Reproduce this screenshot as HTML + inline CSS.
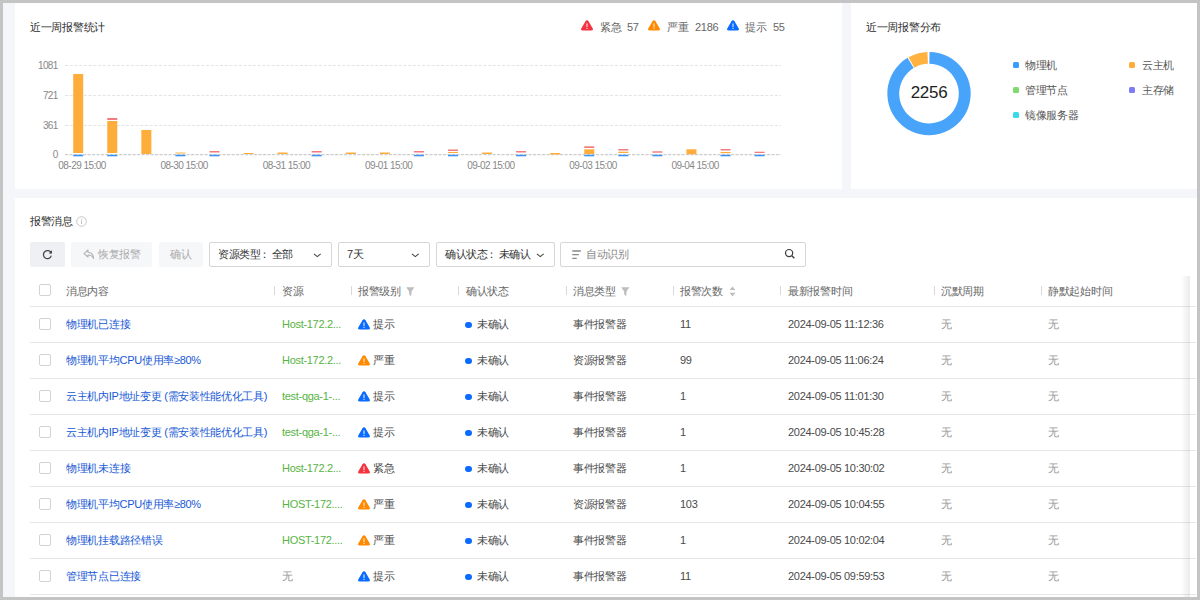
<!DOCTYPE html><html><head><meta charset="utf-8"><style>
*{margin:0;padding:0;box-sizing:border-box}
html,body{width:1200px;height:600px;overflow:hidden}
body{background:#c4c4c4;font-family:"Liberation Sans",sans-serif;font-size:11px;letter-spacing:-0.3px;color:#333;position:relative}
.bg{position:absolute;left:3px;top:3px;width:1194px;height:594px;background:#f5f6fa}
.card{position:absolute;background:#fff}
.t{position:absolute;white-space:nowrap;line-height:12px}
.g{color:#666}
.dk{color:#4a4a4a}
.ti{color:#2a2a2a}
.sk{color:#333}
.lk{color:#1658d6}
.gr{color:#56b443}
.mu{color:#999}
.hd{color:#666}
.sep{position:absolute;width:1px;height:9px;background:#d8d8d8;top:286px}
.hl{position:absolute;left:30px;width:1166px;height:1px;background:#e6e7ea}
.cb{position:absolute;left:39px;width:12px;height:12px;border:1px solid #d3d3d3;border-radius:2px;background:#fff}
.btn{position:absolute;top:242px;height:25px;border-radius:2px}
.sel{position:absolute;top:242px;height:25px;border:1px solid #d6d6d6;border-radius:2px;background:#fff}
.dot{position:absolute;width:6px;height:6px;border-radius:50%;background:#0a6cff}
.lg{position:absolute;width:6px;height:6px;border-radius:1.5px}
</style></head><body>
<div class="bg"></div>
<div class="card" style="left:15px;top:3px;width:827px;height:186px"></div>
<div class="card" style="left:851px;top:3px;width:346px;height:186px"></div>
<div class="card" style="left:15px;top:198px;width:1182px;height:399px"></div>

<div class="t ti" style="left:30px;top:21px;">近一周报警统计</div>
<svg style="position:absolute;left:581px;top:20px" width="12" height="11" viewBox="0 0 12 11"><path d="M6 0.3 Q6.9 0.3 7.5 1.3 L11.6 8.2 Q12.5 10.5 10.2 10.5 L1.8 10.5 Q-0.5 10.5 0.4 8.2 L4.5 1.3 Q5.1 0.3 6 0.3Z" fill="#f5323f"/><rect x="5.45" y="3.4" width="1.1" height="3.6" fill="#fff" opacity="0.85"/><rect x="5.45" y="7.8" width="1.1" height="1.2" fill="#fff" opacity="0.85"/></svg>
<div class="t g" style="left:600px;top:21px;">紧急</div>
<div class="t g" style="left:627px;top:21px;">57</div>
<svg style="position:absolute;left:648px;top:20px" width="12" height="11" viewBox="0 0 12 11"><path d="M6 0.3 Q6.9 0.3 7.5 1.3 L11.6 8.2 Q12.5 10.5 10.2 10.5 L1.8 10.5 Q-0.5 10.5 0.4 8.2 L4.5 1.3 Q5.1 0.3 6 0.3Z" fill="#ff8a00"/><rect x="5.45" y="3.4" width="1.1" height="3.6" fill="#fff" opacity="0.85"/><rect x="5.45" y="7.8" width="1.1" height="1.2" fill="#fff" opacity="0.85"/></svg>
<div class="t g" style="left:667px;top:21px;">严重</div>
<div class="t g" style="left:695px;top:21px;">2186</div>
<svg style="position:absolute;left:727px;top:20px" width="12" height="11" viewBox="0 0 12 11"><path d="M6 0.3 Q6.9 0.3 7.5 1.3 L11.6 8.2 Q12.5 10.5 10.2 10.5 L1.8 10.5 Q-0.5 10.5 0.4 8.2 L4.5 1.3 Q5.1 0.3 6 0.3Z" fill="#0a6cff"/><rect x="5.45" y="3.4" width="1.1" height="3.6" fill="#fff" opacity="0.85"/><rect x="5.45" y="7.8" width="1.1" height="1.2" fill="#fff" opacity="0.85"/></svg>
<div class="t g" style="left:745px;top:21px;">提示</div>
<div class="t g" style="left:773px;top:21px;">55</div>
<svg style="position:absolute;left:0;top:0" width="842" height="189"><line x1="65" y1="65.5" x2="781" y2="65.5" stroke="#e3e4e9" stroke-width="1" stroke-dasharray="3 1.7"/><line x1="65" y1="95.5" x2="781" y2="95.5" stroke="#e3e4e9" stroke-width="1" stroke-dasharray="3 1.7"/><line x1="65" y1="125.5" x2="781" y2="125.5" stroke="#e3e4e9" stroke-width="1" stroke-dasharray="3 1.7"/><line x1="65" y1="154.7" x2="781" y2="154.7" stroke="#cdcdcd" stroke-width="1.2" stroke-dasharray="3.2 1.3"/><rect x="73.2" y="74" width="10" height="79" fill="#ffad3a"/><rect x="73.2" y="154.8" width="10" height="1.5" fill="#3a93f5"/><rect x="107.27" y="118" width="10" height="2" fill="#f47b7b"/><rect x="107.27" y="121" width="10" height="32" fill="#ffad3a"/><rect x="107.27" y="154.8" width="10" height="1.5" fill="#3a93f5"/><rect x="141.34" y="130" width="10" height="24" fill="#ffad3a"/><rect x="175.41" y="152" width="10" height="2" fill="#ffd9a0"/><rect x="175.41" y="154.8" width="10" height="1.5" fill="#3a93f5"/><rect x="209.48" y="151" width="10" height="1.5" fill="#f47b7b"/><rect x="209.48" y="154.8" width="10" height="1.5" fill="#3a93f5"/><rect x="243.55" y="153" width="10" height="1" fill="#ffad3a"/><rect x="277.62" y="152.5" width="10" height="1.5" fill="#ffad3a"/><rect x="311.69" y="151" width="10" height="1.5" fill="#f47b7b"/><rect x="311.69" y="154.8" width="10" height="1.5" fill="#3a93f5"/><rect x="345.76" y="152.5" width="10" height="1.5" fill="#ffad3a"/><rect x="379.83" y="152.5" width="10" height="1.5" fill="#ffad3a"/><rect x="413.9" y="151" width="10" height="1.5" fill="#f47b7b"/><rect x="413.9" y="154.8" width="10" height="1.5" fill="#3a93f5"/><rect x="447.97" y="149.5" width="10" height="1.5" fill="#f47b7b"/><rect x="447.97" y="152" width="10" height="1" fill="#ffad3a"/><rect x="447.97" y="154.8" width="10" height="1.5" fill="#3a93f5"/><rect x="482.04" y="152.5" width="10" height="1.5" fill="#ffad3a"/><rect x="516.11" y="151" width="10" height="1.5" fill="#f47b7b"/><rect x="516.11" y="154.8" width="10" height="1.5" fill="#3a93f5"/><rect x="550.18" y="153" width="10" height="1.5" fill="#ffad3a"/><rect x="584.25" y="146.3" width="10" height="1.6999999999999886" fill="#f47b7b"/><rect x="584.25" y="149.3" width="10" height="4.699999999999989" fill="#ffad3a"/><rect x="584.25" y="154.8" width="10" height="1.5" fill="#3a93f5"/><rect x="618.32" y="149" width="10" height="1.5" fill="#f47b7b"/><rect x="618.32" y="151.7" width="10" height="1.3000000000000114" fill="#ffad3a"/><rect x="618.32" y="154.8" width="10" height="1.5" fill="#3a93f5"/><rect x="652.39" y="151.3" width="10" height="1.3999999999999773" fill="#f47b7b"/><rect x="652.39" y="154.8" width="10" height="1.5" fill="#3a93f5"/><rect x="686.46" y="149.3" width="10" height="5.0" fill="#ffad3a"/><rect x="720.53" y="149" width="10" height="1.5" fill="#f47b7b"/><rect x="720.53" y="152" width="10" height="1.1999999999999886" fill="#ffad3a"/><rect x="720.53" y="154.8" width="10" height="1.5" fill="#3a93f5"/><rect x="754.6" y="151.7" width="10" height="1.3000000000000114" fill="#f47b7b"/><rect x="754.6" y="154.8" width="10" height="1.5" fill="#3a93f5"/></svg>
<div class="t g" style="left:18px;width:39.5px;text-align:right;top:59.5px;font-size:10px;letter-spacing:-0.7px;color:#888">1081</div>
<div class="t g" style="left:18px;width:39.5px;text-align:right;top:89.5px;font-size:10px;letter-spacing:-0.7px;color:#888">721</div>
<div class="t g" style="left:18px;width:39.5px;text-align:right;top:119.5px;font-size:10px;letter-spacing:-0.7px;color:#888">361</div>
<div class="t g" style="left:18px;width:39.5px;text-align:right;top:148.5px;font-size:10px;letter-spacing:-0.7px;color:#888">0</div>
<div class="t g" style="left:42.0px;width:80px;text-align:center;top:159.5px;font-size:10px;letter-spacing:-0.55px;color:#888">08-29 15:00</div>
<div class="t g" style="left:144.2px;width:80px;text-align:center;top:159.5px;font-size:10px;letter-spacing:-0.55px;color:#888">08-30 15:00</div>
<div class="t g" style="left:246.4px;width:80px;text-align:center;top:159.5px;font-size:10px;letter-spacing:-0.55px;color:#888">08-31 15:00</div>
<div class="t g" style="left:348.6px;width:80px;text-align:center;top:159.5px;font-size:10px;letter-spacing:-0.55px;color:#888">09-01 15:00</div>
<div class="t g" style="left:450.8px;width:80px;text-align:center;top:159.5px;font-size:10px;letter-spacing:-0.55px;color:#888">09-02 15:00</div>
<div class="t g" style="left:553.0px;width:80px;text-align:center;top:159.5px;font-size:10px;letter-spacing:-0.55px;color:#888">09-03 15:00</div>
<div class="t g" style="left:655.2px;width:80px;text-align:center;top:159.5px;font-size:10px;letter-spacing:-0.55px;color:#888">09-04 15:00</div>
<div class="t ti" style="left:866px;top:21px;">近一周报警分布</div>
<svg style="position:absolute;left:0;top:0" width="1200" height="189"><path d="M929.51 51.90 A41.7 41.7 0 1 1 907.52 57.86 L913.65 68.06 A29.8 29.8 0 1 0 929.36 63.80Z" fill="#48a4fa"/><path d="M908.53 57.27 A41.7 41.7 0 0 1 927.47 51.93 L927.91 63.82 A29.8 29.8 0 0 0 914.37 67.64Z" fill="#ffb240"/></svg>
<div class="t" style="left:889px;width:80px;text-align:center;top:83px;font-size:17px;line-height:20px;color:#1e1e1e">2256</div>
<div class="lg" style="left:1013px;top:62px;background:#3b9bff"></div>
<div class="t g" style="left:1025px;top:59px;color:#555">物理机</div>
<div class="lg" style="left:1129px;top:62px;background:#ffad3a"></div>
<div class="t g" style="left:1142px;top:59px;color:#555">云主机</div>
<div class="lg" style="left:1013px;top:87px;background:#7fd96e"></div>
<div class="t g" style="left:1025px;top:84px;color:#555">管理节点</div>
<div class="lg" style="left:1129px;top:87px;background:#7c7cf6"></div>
<div class="t g" style="left:1142px;top:84px;color:#555">主存储</div>
<div class="lg" style="left:1013px;top:112px;background:#38dbea"></div>
<div class="t g" style="left:1025px;top:109px;color:#555">镜像服务器</div>
<div class="t ti" style="left:30px;top:215px;">报警消息</div>
<svg style="position:absolute;left:76px;top:216px" width="11" height="11" viewBox="0 0 11 11"><circle cx="5.5" cy="5.5" r="4.8" fill="none" stroke="#c0c0c0" stroke-width="0.9"/><rect x="5" y="4.5" width="1" height="3.6" fill="#c0c0c0"/><rect x="5" y="2.8" width="1" height="1" fill="#c0c0c0"/></svg>
<div class="btn" style="left:30px;width:35px;background:#eff0f4"></div>
<svg style="position:absolute;left:42px;top:249px" width="11" height="11" viewBox="0 0 11 11"><path d="M9.2 4.2 A4 4 0 1 0 9.3 6.6" fill="none" stroke="#444" stroke-width="1.25"/><path d="M6.6 4.6 L10 4.6 L10 1.2Z" fill="#444"/></svg>
<div class="btn" style="left:71px;width:81px;background:#f6f7f9"></div>
<svg style="position:absolute;left:83px;top:249px" width="12" height="11" viewBox="0 0 12 11"><path d="M5 1 L1 4.6 L5 8 L5 6 Q8.6 5.8 10.6 9.6 Q10.4 3.8 5 3.2 Z" fill="none" stroke="#b3b3b3" stroke-width="1.1" stroke-linejoin="round"/></svg>
<div class="t mu" style="left:98px;top:248px;color:#aaa">恢复报警</div>
<div class="btn" style="left:159px;width:44px;background:#f6f7f9"></div>
<div class="t mu" style="left:170px;top:248px;color:#aaa">确认</div>
<div class="sel" style="left:209px;width:123px"></div>
<div class="t sk" style="left:218px;top:248px;">资源类型<span style="position:relative;left:-1.5px">：</span>全部</div>
<svg style="position:absolute;left:313px;top:252px" width="9" height="6" viewBox="0 0 9 6"><path d="M0.9 1.9 L4.3 4.6 L7.7 1.9" fill="none" stroke="#444" stroke-width="1.05"/></svg>
<div class="sel" style="left:338px;width:92px"></div>
<div class="t sk" style="left:347px;top:248px;">7天</div>
<svg style="position:absolute;left:411px;top:252px" width="9" height="6" viewBox="0 0 9 6"><path d="M0.9 1.9 L4.3 4.6 L7.7 1.9" fill="none" stroke="#444" stroke-width="1.05"/></svg>
<div class="sel" style="left:436px;width:119px"></div>
<div class="t sk" style="left:445px;top:248px;">确认状态<span style="position:relative;left:-1.5px">：</span>未确认</div>
<svg style="position:absolute;left:536px;top:252px" width="9" height="6" viewBox="0 0 9 6"><path d="M0.9 1.9 L4.3 4.6 L7.7 1.9" fill="none" stroke="#444" stroke-width="1.05"/></svg>
<div class="sel" style="left:560px;width:246px"></div>
<svg style="position:absolute;left:572px;top:250px" width="10" height="10" viewBox="0 0 10 10"><path d="M0.3 1 H8.8 M0.3 4.6 H6.8 M0.3 8.3 H4.7" stroke="#888" stroke-width="1.3"/></svg>
<div class="t mu" style="left:586px;top:248px;color:#888">自动识别</div>
<svg style="position:absolute;left:784px;top:248px" width="12" height="12" viewBox="0 0 12 12"><circle cx="5.1" cy="5.1" r="3.6" fill="none" stroke="#3c3c3c" stroke-width="1.2"/><path d="M7.8 7.8 L10.4 10.3" stroke="#3c3c3c" stroke-width="1.3"/></svg>
<div class="cb" style="top:284px"></div>
<div class="t hd" style="left:66px;top:285px;">消息内容</div>
<div class="t hd" style="left:282px;top:285px;">资源</div>
<div class="t hd" style="left:358px;top:285px;">报警级别</div>
<div class="t hd" style="left:466px;top:285px;">确认状态</div>
<div class="t hd" style="left:573px;top:285px;">消息类型</div>
<div class="t hd" style="left:680px;top:285px;">报警次数</div>
<div class="t hd" style="left:788px;top:285px;">最新报警时间</div>
<div class="t hd" style="left:941px;top:285px;">沉默周期</div>
<div class="t hd" style="left:1048px;top:285px;">静默起始时间</div>
<div class="sep" style="left:274px"></div>
<div class="sep" style="left:351px"></div>
<div class="sep" style="left:458px"></div>
<div class="sep" style="left:566px"></div>
<div class="sep" style="left:673px"></div>
<div class="sep" style="left:780px"></div>
<div class="sep" style="left:934px"></div>
<div class="sep" style="left:1041px"></div>
<svg style="position:absolute;left:406px;top:287px" width="9" height="10" viewBox="0 0 9 10"><path d="M0.2 0.2 H8.4 L5.6 4.2 L5.2 9.2 L3.3 7.6 L3 4.2 Z" fill="#bdbdbd"/></svg>
<svg style="position:absolute;left:621px;top:287px" width="9" height="10" viewBox="0 0 9 10"><path d="M0.2 0.2 H8.4 L5.6 4.2 L5.2 9.2 L3.3 7.6 L3 4.2 Z" fill="#bdbdbd"/></svg>
<svg style="position:absolute;left:729px;top:286px" width="7" height="11" viewBox="0 0 7 11"><path d="M3.5 0.6 L6.4 4 H0.6Z M3.5 10.4 L6.4 6.8 H0.6Z" fill="#bdbdbd"/></svg>
<div class="hl" style="top:306px"></div>
<div class="cb" style="top:318px"></div>
<div class="t lk" style="left:66px;top:318px;">物理机已连接</div>
<div class="t gr" style="left:282px;top:318px;">Host-172.2...</div>
<svg style="position:absolute;left:358px;top:319px" width="12" height="11" viewBox="0 0 12 11"><path d="M6 0.3 Q6.9 0.3 7.5 1.3 L11.6 8.2 Q12.5 10.5 10.2 10.5 L1.8 10.5 Q-0.5 10.5 0.4 8.2 L4.5 1.3 Q5.1 0.3 6 0.3Z" fill="#0a6cff"/><rect x="5.45" y="3.4" width="1.1" height="3.6" fill="#fff" opacity="0.85"/><rect x="5.45" y="7.8" width="1.1" height="1.2" fill="#fff" opacity="0.85"/></svg>
<div class="t dk" style="left:373px;top:318px;">提示</div>
<div class="dot" style="left:465.3px;top:321.6px;width:6.6px;height:6.6px"></div>
<div class="t dk" style="left:477px;top:318px;">未确认</div>
<div class="t dk" style="left:573px;top:318px;">事件报警器</div>
<div class="t dk" style="left:680px;top:318px;">11</div>
<div class="t dk" style="left:788px;top:318px;">2024-09-05 11:12:36</div>
<div class="t mu" style="left:941px;top:318px;">无</div>
<div class="t mu" style="left:1048px;top:318px;">无</div>
<div class="hl" style="top:342px"></div>
<div class="cb" style="top:354px"></div>
<div class="t lk" style="left:66px;top:354px;">物理机平均CPU使用率≥80%</div>
<div class="t gr" style="left:282px;top:354px;">Host-172.2...</div>
<svg style="position:absolute;left:358px;top:355px" width="12" height="11" viewBox="0 0 12 11"><path d="M6 0.3 Q6.9 0.3 7.5 1.3 L11.6 8.2 Q12.5 10.5 10.2 10.5 L1.8 10.5 Q-0.5 10.5 0.4 8.2 L4.5 1.3 Q5.1 0.3 6 0.3Z" fill="#ff8a00"/><rect x="5.45" y="3.4" width="1.1" height="3.6" fill="#fff" opacity="0.85"/><rect x="5.45" y="7.8" width="1.1" height="1.2" fill="#fff" opacity="0.85"/></svg>
<div class="t dk" style="left:373px;top:354px;">严重</div>
<div class="dot" style="left:465.3px;top:357.6px;width:6.6px;height:6.6px"></div>
<div class="t dk" style="left:477px;top:354px;">未确认</div>
<div class="t dk" style="left:573px;top:354px;">资源报警器</div>
<div class="t dk" style="left:680px;top:354px;">99</div>
<div class="t dk" style="left:788px;top:354px;">2024-09-05 11:06:24</div>
<div class="t mu" style="left:941px;top:354px;">无</div>
<div class="t mu" style="left:1048px;top:354px;">无</div>
<div class="hl" style="top:378px"></div>
<div class="cb" style="top:390px"></div>
<div class="t lk" style="left:66px;top:390px;">云主机内IP地址变更 (需安装性能优化工具)</div>
<div class="t gr" style="left:282px;top:390px;">test-qga-1-...</div>
<svg style="position:absolute;left:358px;top:391px" width="12" height="11" viewBox="0 0 12 11"><path d="M6 0.3 Q6.9 0.3 7.5 1.3 L11.6 8.2 Q12.5 10.5 10.2 10.5 L1.8 10.5 Q-0.5 10.5 0.4 8.2 L4.5 1.3 Q5.1 0.3 6 0.3Z" fill="#0a6cff"/><rect x="5.45" y="3.4" width="1.1" height="3.6" fill="#fff" opacity="0.85"/><rect x="5.45" y="7.8" width="1.1" height="1.2" fill="#fff" opacity="0.85"/></svg>
<div class="t dk" style="left:373px;top:390px;">提示</div>
<div class="dot" style="left:465.3px;top:393.6px;width:6.6px;height:6.6px"></div>
<div class="t dk" style="left:477px;top:390px;">未确认</div>
<div class="t dk" style="left:573px;top:390px;">事件报警器</div>
<div class="t dk" style="left:680px;top:390px;">1</div>
<div class="t dk" style="left:788px;top:390px;">2024-09-05 11:01:30</div>
<div class="t mu" style="left:941px;top:390px;">无</div>
<div class="t mu" style="left:1048px;top:390px;">无</div>
<div class="hl" style="top:414px"></div>
<div class="cb" style="top:426px"></div>
<div class="t lk" style="left:66px;top:426px;">云主机内IP地址变更 (需安装性能优化工具)</div>
<div class="t gr" style="left:282px;top:426px;">test-qga-1-...</div>
<svg style="position:absolute;left:358px;top:427px" width="12" height="11" viewBox="0 0 12 11"><path d="M6 0.3 Q6.9 0.3 7.5 1.3 L11.6 8.2 Q12.5 10.5 10.2 10.5 L1.8 10.5 Q-0.5 10.5 0.4 8.2 L4.5 1.3 Q5.1 0.3 6 0.3Z" fill="#0a6cff"/><rect x="5.45" y="3.4" width="1.1" height="3.6" fill="#fff" opacity="0.85"/><rect x="5.45" y="7.8" width="1.1" height="1.2" fill="#fff" opacity="0.85"/></svg>
<div class="t dk" style="left:373px;top:426px;">提示</div>
<div class="dot" style="left:465.3px;top:429.6px;width:6.6px;height:6.6px"></div>
<div class="t dk" style="left:477px;top:426px;">未确认</div>
<div class="t dk" style="left:573px;top:426px;">事件报警器</div>
<div class="t dk" style="left:680px;top:426px;">1</div>
<div class="t dk" style="left:788px;top:426px;">2024-09-05 10:45:28</div>
<div class="t mu" style="left:941px;top:426px;">无</div>
<div class="t mu" style="left:1048px;top:426px;">无</div>
<div class="hl" style="top:450px"></div>
<div class="cb" style="top:462px"></div>
<div class="t lk" style="left:66px;top:462px;">物理机未连接</div>
<div class="t gr" style="left:282px;top:462px;">Host-172.2...</div>
<svg style="position:absolute;left:358px;top:463px" width="12" height="11" viewBox="0 0 12 11"><path d="M6 0.3 Q6.9 0.3 7.5 1.3 L11.6 8.2 Q12.5 10.5 10.2 10.5 L1.8 10.5 Q-0.5 10.5 0.4 8.2 L4.5 1.3 Q5.1 0.3 6 0.3Z" fill="#f5323f"/><rect x="5.45" y="3.4" width="1.1" height="3.6" fill="#fff" opacity="0.85"/><rect x="5.45" y="7.8" width="1.1" height="1.2" fill="#fff" opacity="0.85"/></svg>
<div class="t dk" style="left:373px;top:462px;">紧急</div>
<div class="dot" style="left:465.3px;top:465.6px;width:6.6px;height:6.6px"></div>
<div class="t dk" style="left:477px;top:462px;">未确认</div>
<div class="t dk" style="left:573px;top:462px;">事件报警器</div>
<div class="t dk" style="left:680px;top:462px;">1</div>
<div class="t dk" style="left:788px;top:462px;">2024-09-05 10:30:02</div>
<div class="t mu" style="left:941px;top:462px;">无</div>
<div class="t mu" style="left:1048px;top:462px;">无</div>
<div class="hl" style="top:486px"></div>
<div class="cb" style="top:498px"></div>
<div class="t lk" style="left:66px;top:498px;">物理机平均CPU使用率≥80%</div>
<div class="t gr" style="left:282px;top:498px;">HOST-172....</div>
<svg style="position:absolute;left:358px;top:499px" width="12" height="11" viewBox="0 0 12 11"><path d="M6 0.3 Q6.9 0.3 7.5 1.3 L11.6 8.2 Q12.5 10.5 10.2 10.5 L1.8 10.5 Q-0.5 10.5 0.4 8.2 L4.5 1.3 Q5.1 0.3 6 0.3Z" fill="#ff8a00"/><rect x="5.45" y="3.4" width="1.1" height="3.6" fill="#fff" opacity="0.85"/><rect x="5.45" y="7.8" width="1.1" height="1.2" fill="#fff" opacity="0.85"/></svg>
<div class="t dk" style="left:373px;top:498px;">严重</div>
<div class="dot" style="left:465.3px;top:501.6px;width:6.6px;height:6.6px"></div>
<div class="t dk" style="left:477px;top:498px;">未确认</div>
<div class="t dk" style="left:573px;top:498px;">资源报警器</div>
<div class="t dk" style="left:680px;top:498px;">103</div>
<div class="t dk" style="left:788px;top:498px;">2024-09-05 10:04:55</div>
<div class="t mu" style="left:941px;top:498px;">无</div>
<div class="t mu" style="left:1048px;top:498px;">无</div>
<div class="hl" style="top:522px"></div>
<div class="cb" style="top:534px"></div>
<div class="t lk" style="left:66px;top:534px;">物理机挂载路径错误</div>
<div class="t gr" style="left:282px;top:534px;">HOST-172....</div>
<svg style="position:absolute;left:358px;top:535px" width="12" height="11" viewBox="0 0 12 11"><path d="M6 0.3 Q6.9 0.3 7.5 1.3 L11.6 8.2 Q12.5 10.5 10.2 10.5 L1.8 10.5 Q-0.5 10.5 0.4 8.2 L4.5 1.3 Q5.1 0.3 6 0.3Z" fill="#ff8a00"/><rect x="5.45" y="3.4" width="1.1" height="3.6" fill="#fff" opacity="0.85"/><rect x="5.45" y="7.8" width="1.1" height="1.2" fill="#fff" opacity="0.85"/></svg>
<div class="t dk" style="left:373px;top:534px;">严重</div>
<div class="dot" style="left:465.3px;top:537.6px;width:6.6px;height:6.6px"></div>
<div class="t dk" style="left:477px;top:534px;">未确认</div>
<div class="t dk" style="left:573px;top:534px;">事件报警器</div>
<div class="t dk" style="left:680px;top:534px;">1</div>
<div class="t dk" style="left:788px;top:534px;">2024-09-05 10:02:04</div>
<div class="t mu" style="left:941px;top:534px;">无</div>
<div class="t mu" style="left:1048px;top:534px;">无</div>
<div class="hl" style="top:558px"></div>
<div class="cb" style="top:570px"></div>
<div class="t lk" style="left:66px;top:570px;">管理节点已连接</div>
<div class="t mu" style="left:282px;top:570px;">无</div>
<svg style="position:absolute;left:358px;top:571px" width="12" height="11" viewBox="0 0 12 11"><path d="M6 0.3 Q6.9 0.3 7.5 1.3 L11.6 8.2 Q12.5 10.5 10.2 10.5 L1.8 10.5 Q-0.5 10.5 0.4 8.2 L4.5 1.3 Q5.1 0.3 6 0.3Z" fill="#0a6cff"/><rect x="5.45" y="3.4" width="1.1" height="3.6" fill="#fff" opacity="0.85"/><rect x="5.45" y="7.8" width="1.1" height="1.2" fill="#fff" opacity="0.85"/></svg>
<div class="t dk" style="left:373px;top:570px;">提示</div>
<div class="dot" style="left:465.3px;top:573.6px;width:6.6px;height:6.6px"></div>
<div class="t dk" style="left:477px;top:570px;">未确认</div>
<div class="t dk" style="left:573px;top:570px;">事件报警器</div>
<div class="t dk" style="left:680px;top:570px;">11</div>
<div class="t dk" style="left:788px;top:570px;">2024-09-05 09:59:53</div>
<div class="t mu" style="left:941px;top:570px;">无</div>
<div class="t mu" style="left:1048px;top:570px;">无</div>
<div class="hl" style="top:594px"></div>
<div style="position:absolute;left:1181px;top:276px;width:9px;height:321px;background:linear-gradient(to right,rgba(0,0,0,0),rgba(0,0,0,0.08))"></div>
</body></html>
